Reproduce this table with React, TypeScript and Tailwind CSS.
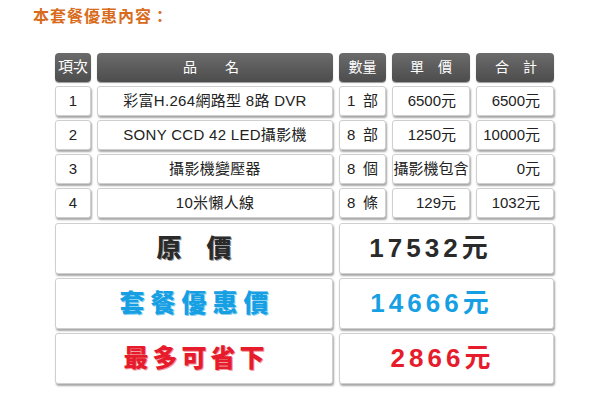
const cell =
  "flex items-center justify-center rounded-[3px] border border-[#cfcfcf] bg-white shadow-[1px_2px_2px_rgba(0,0,0,0.35)]";
const head =
  "flex items-center justify-center rounded-[4px] bg-gradient-to-b from-[#6b6b6b] to-[#4d4d4d] text-white text-[14px] shadow-[0_1px_1px_rgba(0,0,0,0.4)]";

const rows = [
  { no: "1", name: "彩富H.264網路型 8路 DVR", qty: "1\u2002部", price: "6500元", total: "6500元" },
  { no: "2", name: "SONY CCD 42 LED攝影機", qty: "8\u2002部", price: "1250元", total: "10000元" },
  { no: "3", name: "攝影機變壓器", qty: "8\u2002個", price: "攝影機包含", total: "0元" },
  { no: "4", name: "10米懶人線", qty: "8\u2002條", price: "129元", total: "1032元" },
];

const App = () => {
  return (
    <div
      className="w-[600px] h-[402px] bg-white text-[#222]"
      style={{ fontFamily: '"Liberation Sans", "Noto Sans CJK TC", sans-serif' }}
    >
      <div className="pl-[33px] pt-[7px] text-[16px] font-bold tracking-[1px] text-[#d96c1c] leading-[20px]">
        本套餐優惠內容：
      </div>

      <div className="ml-[55px] mt-[26px] grid grid-cols-[36px_236px_47px_78px_78px] gap-x-[6px] gap-y-[4px]">
        <div className={`${head} h-[29px] text-[15px]`}>項次</div>
        <div className={`${head} h-[29px] pr-[8px]`}>品　　名</div>
        <div className={`${head} h-[29px]`}>數量</div>
        <div className={`${head} h-[29px]`}>單　價</div>
        <div className={`${head} h-[29px] pl-[2px]`}>合　計</div>

        {rows.map((r) => (
          <div key={r.no} className="contents">
            <div className={`${cell} h-[30px] text-[15px]`}>{r.no}</div>
            <div className={`${cell} h-[30px] text-[15px] tracking-[0.3px]`}>{r.name}</div>
            <div className={`${cell} h-[30px] text-[15px]`}>{r.qty}</div>
            <div
              className={`${cell} h-[30px] text-[15px] ${
                r.price === "攝影機包含" ? "" : "!justify-end pr-[13px]"
              }`}
            >
              {r.price}
            </div>
            <div className={`${cell} h-[30px] text-[15px] !justify-end pr-[13px]`}>{r.total}</div>
          </div>
        ))}

        <div className={`${cell} col-span-2 h-[51px] mt-[1px] text-[25px] font-black text-[#2a2a2a] [text-shadow:1px_1px_0_#999]`}>
          原　價
        </div>
        <div className={`${cell} col-span-3 h-[51px] mt-[1px] pr-[32px] text-[26px] font-bold tracking-[4px] text-[#2a2a2a]`}>
          17532元
        </div>

        <div className={`${cell} col-span-2 h-[51px] text-[25px] font-black tracking-[6px] pl-[6px] text-[#16a0e3] [text-shadow:1px_1px_0_#8fd0ef]`}>
          套餐優惠價
        </div>
        <div className={`${cell} col-span-3 h-[51px] pr-[30px] text-[26px] font-bold tracking-[4px] text-[#16a0e3]`}>
          14666元
        </div>

        <div className={`${cell} col-span-2 h-[51px] text-[25px] font-black tracking-[4px] pl-[4px] text-[#e61c2c] [text-shadow:1px_1px_0_#f29aa1]`}>
          最多可省下
        </div>
        <div className={`${cell} col-span-3 h-[51px] pr-[8px] text-[26px] font-bold tracking-[4px] text-[#e61c2c]`}>
          2866元
        </div>
      </div>
    </div>
  );
};

export default App;
